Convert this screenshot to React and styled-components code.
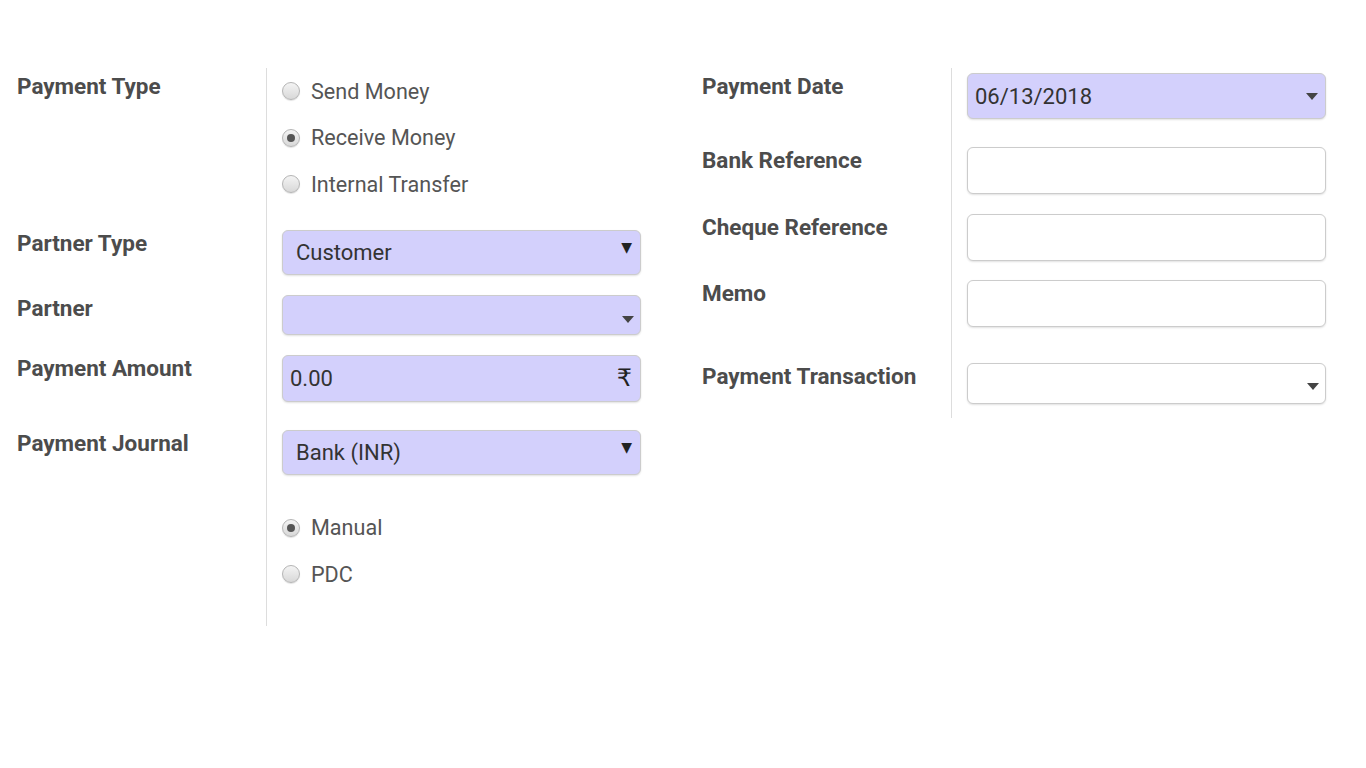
import styled, { createGlobalStyle } from 'styled-components';

const GlobalStyle = createGlobalStyle`
  html, body {
    margin: 0;
    padding: 0;
    background: #fff;
  }
  body {
    font-family: Roboto, "Liberation Sans", sans-serif;
  }
`;

const Page = styled.div`
  display: flex;
  align-items: flex-start;
  gap: 61px;
  padding: 68px 0 0 17px;
  width: 1366px;
  box-sizing: border-box;
`;

const Group = styled.div`
  display: grid;
  grid-template-columns: 249px ${(props) => props.$field}px;
`;

const Label = styled.div`
  padding-top: ${(props) => props.$top || 2}px;
  font-size: 22.5px;
  line-height: 22px;
  font-weight: 700;
  color: #4c4c4c;
  white-space: nowrap;
`;

const Cell = styled.div`
  border-left: 1px solid #ddd;
  padding: ${(props) => props.$top || 0}px 0 ${(props) => props.$bottom || 0}px 15px;
`;

const RadioRow = styled.label`
  display: flex;
  align-items: center;
  gap: 11px;
  height: 46.5px;
  font-size: 21.6px;
  color: #555;
`;

const RadioDot = styled.span`
  position: relative;
  width: 18px;
  height: 18px;
  border-radius: 50%;
  box-sizing: border-box;
  border: 1px solid #b5b5b5;
  background: linear-gradient(#f4f4f4, #d8d8d8);
  box-shadow: 0 1px 1px rgba(0, 0, 0, 0.12);

  &::after {
    content: '';
    display: ${(props) => (props.$checked ? 'block' : 'none')};
    position: absolute;
    left: 4px;
    top: 4px;
    width: 8px;
    height: 8px;
    border-radius: 50%;
    background: #555;
  }
`;

const Field = styled.div`
  display: flex;
  align-items: center;
  justify-content: space-between;
  height: ${(props) => props.$height}px;
  padding: 0 ${(props) => props.$padRight || 13}px 0 ${(props) => props.$padLeft || 13}px;
  box-sizing: border-box;
  border: 1px solid #ccc;
  border-radius: 6px;
  background: ${(props) => (props.$filled ? '#d3d0fc' : '#fff')};
  box-shadow: 0 1px 2px rgba(0, 0, 0, 0.12);
  font-size: 22px;
  color: #333;
`;

const Caret = styled.span`
  width: 0;
  height: 0;
  margin-top: ${(props) => props.$offset || 0}px;
  border-left: 6px solid transparent;
  border-right: 6px solid transparent;
  border-top: 7px solid #444;
`;

const SolidArrow = styled.span`
  align-self: flex-start;
  margin-top: 8px;
  font-size: 14px;
  color: #222;
  font-family: "DejaVu Sans", sans-serif;
`;

const Currency = styled.span`
  font-size: 24px;
  color: #222;
  font-family: "DejaVu Sans", "Noto Sans", sans-serif;
  margin-top: 0;
`;

const Radio = ({ checked, children }) => (
  <RadioRow>
    <RadioDot $checked={checked} />
    {children}
  </RadioRow>
);

const App = () => (
  <>
    <GlobalStyle />
    <Page>
      <Group $field={375}>
        <Label $top={7}>Payment Type</Label>
        <Cell $bottom={22}>
          <Radio>Send Money</Radio>
          <Radio checked>Receive Money</Radio>
          <Radio>Internal Transfer</Radio>
        </Cell>

        <Label>Partner Type</Label>
        <Cell $bottom={20}>
          <Field $height={45} $filled $padRight={8}>
            Customer
            <SolidArrow>▼</SolidArrow>
          </Field>
        </Cell>

        <Label>Partner</Label>
        <Cell $bottom={20}>
          <Field $height={40} $filled $padRight={6}>
            <span />
            <Caret $offset={10} />
          </Field>
        </Cell>

        <Label>Payment Amount</Label>
        <Cell $bottom={28}>
          <Field $height={47} $filled $padLeft={7} $padRight={8}>
            0.00
            <Currency>₹</Currency>
          </Field>
        </Cell>

        <Label>Payment Journal</Label>
        <Cell $bottom={30}>
          <Field $height={45} $filled $padRight={8}>
            Bank (INR)
            <SolidArrow>▼</SolidArrow>
          </Field>
        </Cell>

        <span />
        <Cell $bottom={28}>
          <Radio checked>Manual</Radio>
          <Radio>PDC</Radio>
        </Cell>
      </Group>

      <Group $field={375}>
        <Label $top={7}>Payment Date</Label>
        <Cell $top={5} $bottom={28}>
          <Field $height={46} $filled $padLeft={7} $padRight={7}>
            06/13/2018
            <Caret />
          </Field>
        </Cell>

        <Label>Bank Reference</Label>
        <Cell $bottom={20}>
          <Field $height={47} />
        </Cell>

        <Label>Cheque Reference</Label>
        <Cell $bottom={19}>
          <Field $height={47} />
        </Cell>

        <Label>Memo</Label>
        <Cell $bottom={36}>
          <Field $height={47} />
        </Cell>

        <Label>Payment Transaction</Label>
        <Cell $bottom={14}>
          <Field $height={41} $padRight={6}>
            <span />
            <Caret $offset={6} />
          </Field>
        </Cell>
      </Group>
    </Page>
  </>
);

export default App;
